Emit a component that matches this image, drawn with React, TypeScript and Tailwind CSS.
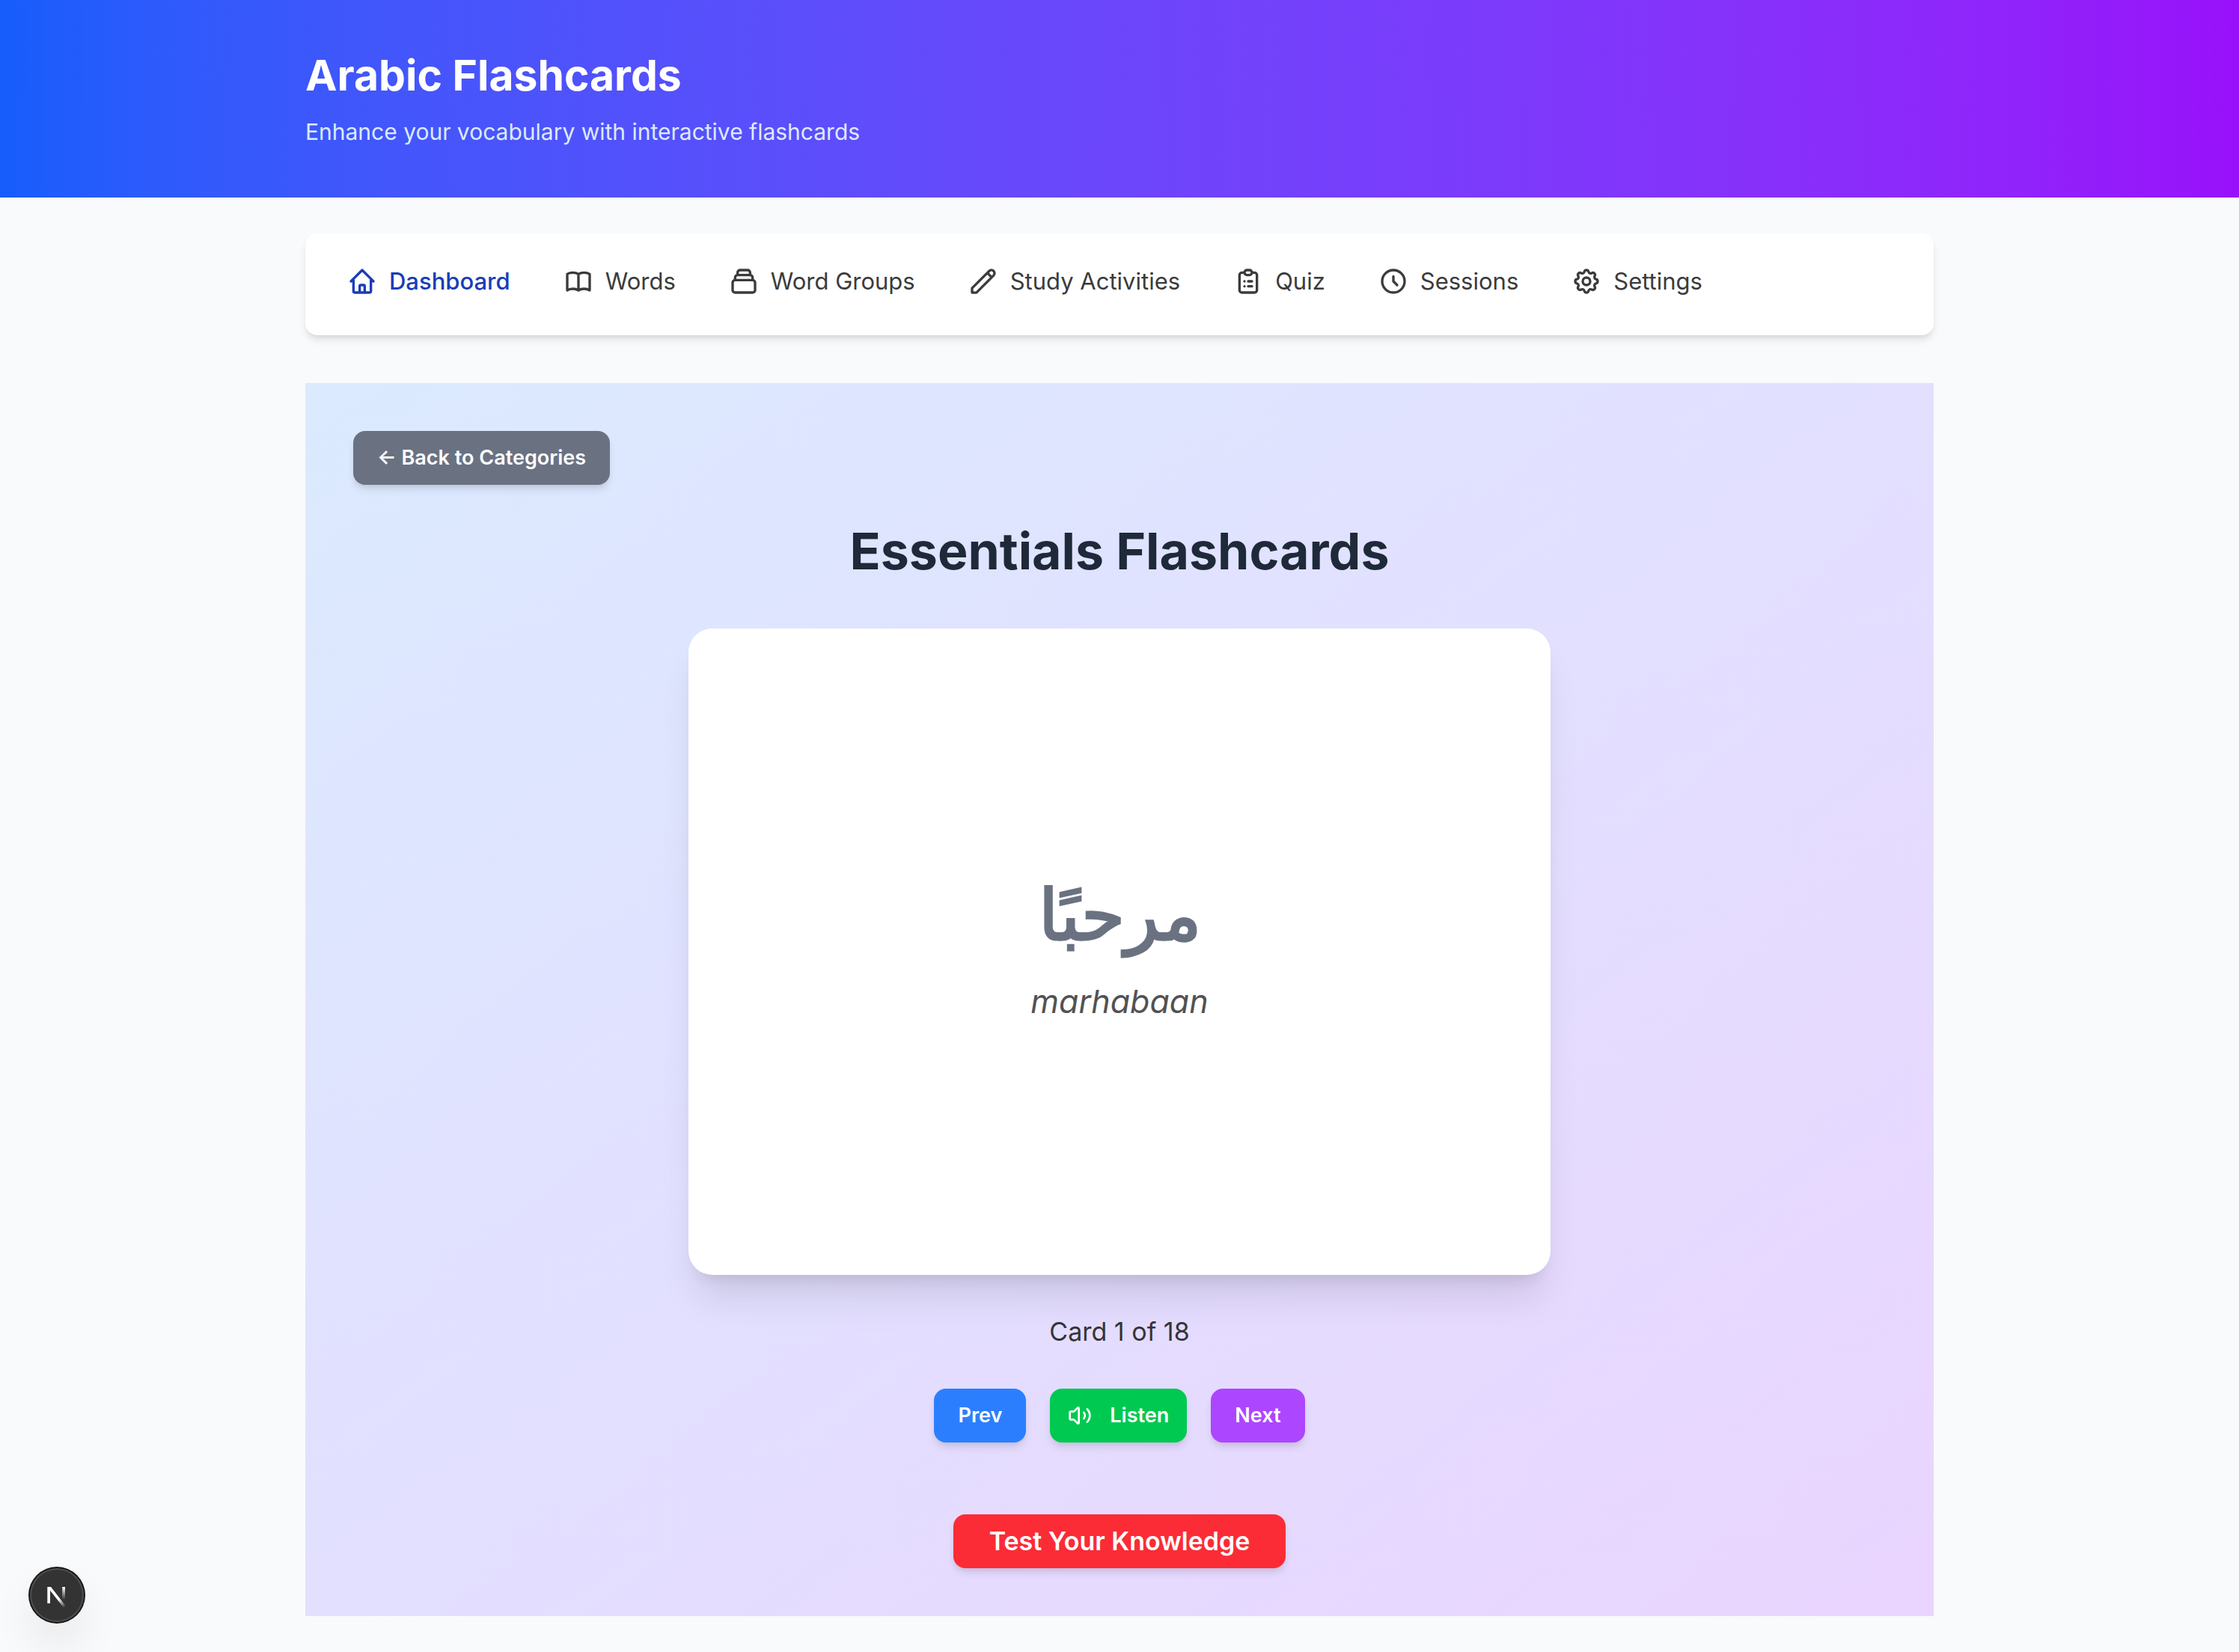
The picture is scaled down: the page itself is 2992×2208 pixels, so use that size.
import React from "react";
import {
  HiOutlineHome,
  HiOutlineBookOpen,
  HiOutlineCollection,
  HiOutlinePencil,
  HiOutlineClipboardList,
  HiOutlineClock,
  HiOutlineCog,
} from "react-icons/hi";
import { Volume2 } from "lucide-react";

const navItems = [
  { label: "Dashboard", icon: HiOutlineHome, active: true },
  { label: "Words", icon: HiOutlineBookOpen, active: false },
  { label: "Word Groups", icon: HiOutlineCollection, active: false },
  { label: "Study Activities", icon: HiOutlinePencil, active: false },
  { label: "Quiz", icon: HiOutlineClipboardList, active: false },
  { label: "Sessions", icon: HiOutlineClock, active: false },
  { label: "Settings", icon: HiOutlineCog, active: false },
];

const buttonShadow =
  "shadow-[0_8px_12px_-2px_rgb(0_0_0/0.1),0_4px_8px_-4px_rgb(0_0_0/0.1)]";

function Header() {
  return (
    <header className="bg-linear-to-r from-blue-600 to-purple-600 py-16">
      <div className="mx-auto max-w-[2304px] px-16">
        <h1 className="text-[57px] leading-[74px] font-bold text-white">Arabic Flashcards</h1>
        <p className="mt-[14px] text-[30px] leading-[48px] text-blue-100">
          Enhance your vocabulary with interactive flashcards
        </p>
      </div>
    </header>
  );
}

function Navigation() {
  return (
    <nav
      aria-label="Main"
      className={`rounded-2xl bg-white px-14 pt-10 pb-12 ${buttonShadow}`}
    >
      <ul className="flex flex-wrap gap-x-[71px]">
        {navItems.map(({ label, icon: Icon, active }) => (
          <li key={label}>
            <a
              href="#"
              aria-current={active ? "page" : undefined}
              className={`flex items-center gap-4 text-[31px] leading-[48px] ${
                active ? "font-medium text-blue-800" : "text-[#3b3b3b]"
              }`}
            >
              <Icon className="size-10 shrink-0" aria-hidden="true" />
              {label}
            </a>
          </li>
        ))}
      </ul>
    </nav>
  );
}

function Flashcard() {
  return (
    <div className="flex aspect-4/3 w-full max-w-6xl flex-col items-center justify-center gap-9 rounded-[32px] bg-white shadow-[0_40px_50px_-10px_rgb(0_0_0/0.1),0_16px_20px_-12px_rgb(0_0_0/0.1)]">
      <p lang="ar" dir="rtl" className="text-[94px] leading-24 font-bold text-gray-500">
        مرحبًا
      </p>
      <p className="text-[43px] leading-16 text-[#525252] italic">marhabaan</p>
    </div>
  );
}

function DevBadge() {
  return (
    <button
      type="button"
      aria-label="Open Next.js Dev Tools"
      className="fixed bottom-10 left-10 size-18 rounded-full bg-[#333333] shadow-[0_0_0_2px_#171717,inset_0_0_0_2px_rgb(255_255_255/0.14),0_32px_64px_-16px_rgb(0_0_0/0.24)]"
    >
      <svg viewBox="0 0 72 72" className="size-18" aria-hidden="true">
        <defs>
          <linearGradient id="slant" gradientUnits="userSpaceOnUse" x1="39" y1="41" x2="47" y2="52">
            <stop stopColor="#fff" />
            <stop offset="1" stopColor="#fff" stopOpacity="0" />
          </linearGradient>
          <linearGradient id="stem" gradientUnits="userSpaceOnUse" x1="45" y1="25" x2="45" y2="42">
            <stop stopColor="#fff" />
            <stop offset="1" stopColor="#fff" stopOpacity="0" />
          </linearGradient>
        </defs>
        <path d="M23.3 25H28L48.8 51.8L46 54L27 29.8V47H23.3Z" fill="url(#slant)" />
        <path d="M43.2 25H47V42H43.2Z" fill="url(#stem)" />
      </svg>
    </button>
  );
}

export default function App() {
  const button = `flex items-center rounded-2xl py-4 text-[27px] leading-10 font-semibold text-white ${buttonShadow}`;

  return (
    <div className="min-h-screen bg-gray-50 font-[Inter,'Noto_Sans',sans-serif]">
      <Header />
      <div className="mx-auto flex max-w-[2304px] flex-col gap-16 px-16 py-12">
        <Navigation />
        <main className="flex flex-col items-center bg-linear-to-br from-blue-100 to-purple-200 p-16">
          <button type="button" className={`${button} self-start bg-gray-500 px-8`}>
            ← Back to Categories
          </button>
          <h2 className="mt-12 mb-16 text-[68px] leading-20 font-bold text-gray-800">
            Essentials Flashcards
          </h2>
          <Flashcard />
          <p className="my-12 text-[34px] leading-14 text-[#343437]">Card 1 of 18</p>
          <div className="flex gap-8">
            <button type="button" className={`${button} bg-blue-500 px-8`}>
              Prev
            </button>
            <button type="button" className={`${button} gap-6 bg-green-500 px-6`}>
              <Volume2 className="size-8" aria-hidden="true" />
              Listen
            </button>
            <button type="button" className={`${button} bg-purple-500 px-8`}>
              Next
            </button>
          </div>
          <button
            type="button"
            className={`mt-24 rounded-2xl bg-red-500 px-12 py-4 text-[34px] leading-10 font-semibold text-white ${buttonShadow}`}
          >
            Test Your Knowledge
          </button>
        </main>
      </div>
      <DevBadge />
    </div>
  );
}
